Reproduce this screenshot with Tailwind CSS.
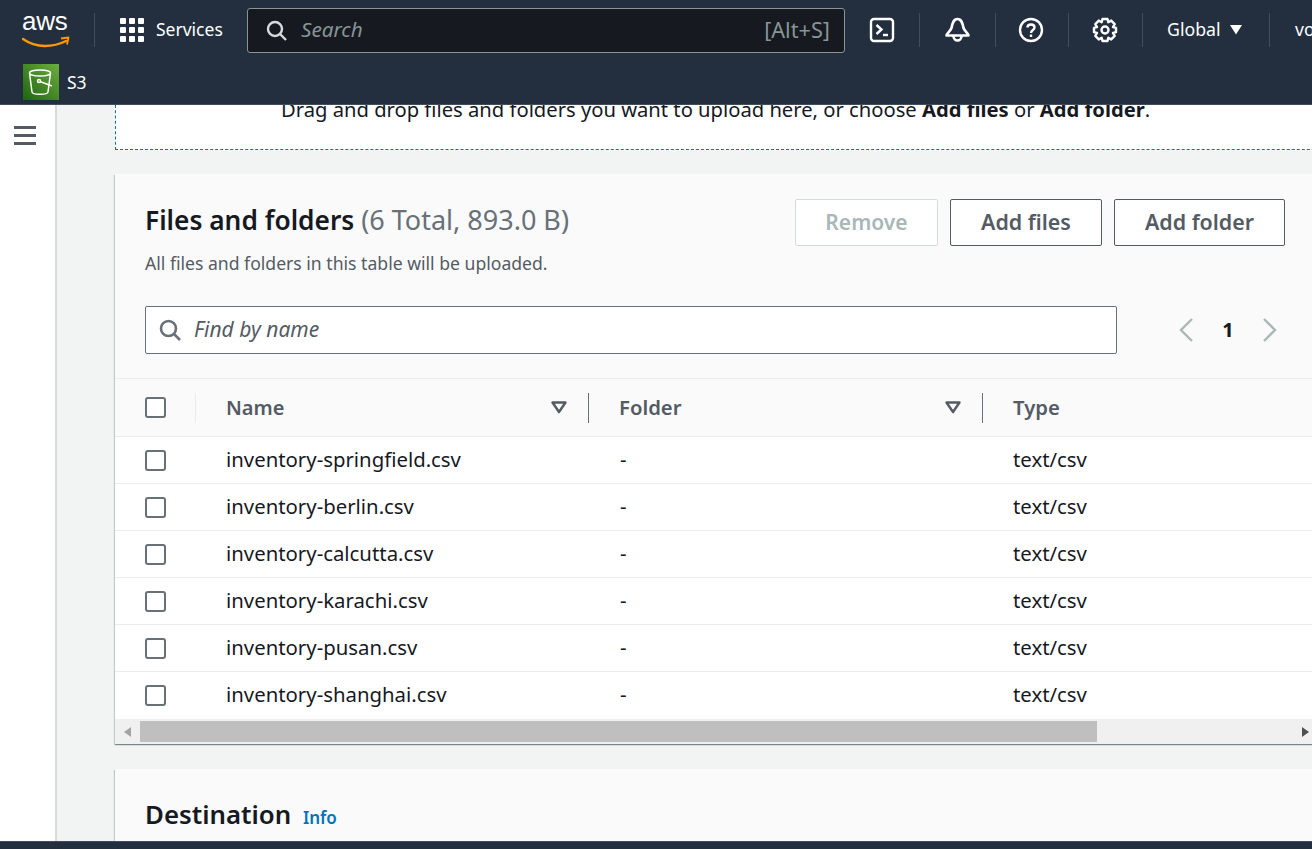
<!DOCTYPE html>
<html lang="en">
<head>
    <meta charset="UTF-8">
    <meta name="viewport" content="width=device-width, initial-scale=1.0">
    <script src="https://cdn.jsdelivr.net/npm/@tailwindcss/browser@4"></script>
    <title>Upload - S3</title>
</head>
<body class="bg-[#f2f3f3] font-['Noto_Sans',sans-serif] text-[#16191f] overflow-hidden">
<div class="flex flex-col h-[849px] w-[1312px] overflow-hidden">

    <!-- Top navigation -->
    <header class="h-[105px] shrink-0 bg-[#232f3e] border-b border-[#414d5c] text-white">
        <div class="h-[60px] flex items-center whitespace-nowrap overflow-hidden">
            <div class="w-[94px] shrink-0 flex justify-center pr-[2px]">
                <div class="relative w-[48px] h-[34px]">
                    <span class="absolute left-0 top-[-9px] text-[26px] leading-[34px] tracking-[-0.3px] font-['Liberation_Sans',sans-serif]">aws</span>
                    <svg class="absolute left-0 top-[22px]" width="48" height="14" viewBox="0 0 48 14" fill="none">
                        <path d="M1 4C8 9 15 11 23 11C31 11 38 9 44 6" stroke="#f90" stroke-width="2.4" stroke-linecap="round"/>
                        <path d="M39 3.5L46.5 2.5L45 9.5" stroke="#f90" stroke-width="1.8" fill="none" stroke-linejoin="round"/>
                    </svg>
                </div>
            </div>
            <div class="w-px h-[34px] bg-[#414d5c] shrink-0"></div>
            <div class="w-[152px] shrink-0 flex items-center pl-[25px]">
                <div class="grid grid-cols-3 gap-[3px]">
                    <i class="w-[6px] h-[6px] bg-white rounded-[1px]"></i><i class="w-[6px] h-[6px] bg-white rounded-[1px]"></i><i class="w-[6px] h-[6px] bg-white rounded-[1px]"></i>
                    <i class="w-[6px] h-[6px] bg-white rounded-[1px]"></i><i class="w-[6px] h-[6px] bg-white rounded-[1px]"></i><i class="w-[6px] h-[6px] bg-white rounded-[1px]"></i>
                    <i class="w-[6px] h-[6px] bg-white rounded-[1px]"></i><i class="w-[6px] h-[6px] bg-white rounded-[1px]"></i><i class="w-[6px] h-[6px] bg-white rounded-[1px]"></i>
                </div>
                <span class="ml-[12px] mb-[2px] text-[17.5px]">Services</span>
            </div>
            <div class="w-[598px] h-[45px] shrink-0 bg-[#16191f] border border-[#879596] rounded-[3px] flex items-center pl-[18px] pr-[14px]">
                <svg width="21" height="21" viewBox="0 0 21 21" fill="none" stroke="#d5dbdb" stroke-width="2.4">
                    <circle cx="9" cy="9" r="7"/><path d="M14 14L20 20"/>
                </svg>
                <span class="ml-[14px] italic text-[20.7px] text-[#879596]">Search</span>
                <span class="ml-auto text-[21.7px] text-[#879596]">[Alt+S]</span>
            </div>
            <div class="w-[74px] shrink-0 flex justify-center">
                <svg width="26" height="26" viewBox="0 0 26 26" fill="none" stroke="#fff" stroke-width="2.4">
                    <rect x="2" y="2" width="22" height="22" rx="3"/>
                    <path d="M7.5 8L12.5 12.5L7.5 17"/><path d="M14 18H19"/>
                </svg>
            </div>
            <div class="w-px h-[34px] bg-[#414d5c] shrink-0"></div>
            <div class="w-[75px] shrink-0 flex justify-center pr-[1px]">
                <svg width="25" height="26" viewBox="0 0 25 26" fill="none" stroke="#fff" stroke-width="2.6" stroke-linejoin="round">
                    <path d="M1.500 18.500H23.500C23.500 16.500 19.500 14 18.500 11C17.500 6 16.500 2 12.500 2C8.500 2 7.500 6 6.500 11C5.500 14 1.500 16.500 1.500 18.500Z"/>
                    <path d="M8.500 19C8.500 25 16.500 25 16.500 19"/>
                </svg>
            </div>
            <div class="w-px h-[34px] bg-[#414d5c] shrink-0"></div>
            <div class="w-[72px] shrink-0 flex justify-center pr-[2px]">
                <svg width="26" height="26" viewBox="0 0 26 26" fill="none" stroke="#fff" stroke-width="2.4">
                    <circle cx="13" cy="13" r="11"/>
                    <path d="M9.500 10.500C9.500 6.500 16.500 6.500 16.500 10.500C16.500 13 13 13 13 16"/>
                    <path d="M13 17.500V20"/>
                </svg>
            </div>
            <div class="w-px h-[34px] bg-[#414d5c] shrink-0"></div>
            <div class="w-[73px] shrink-0 flex justify-center pr-[1px]">
                <svg width="26" height="26" viewBox="0 0 26 26" fill="none" stroke="#fff" stroke-width="2.4" stroke-linejoin="round">
                    <circle cx="13" cy="13" r="3.500"/>
                    <path d="M10.500 2H15.500L16.300 5.200L19.200 3.600L22.700 7.100L21 10L24 10.800V15.200L21 16L22.700 18.900L19.200 22.400L16.300 20.800L15.500 24H10.500L9.700 20.800L6.800 22.400L3.300 18.900L5 16L2 15.200V10.800L5 10L3.300 7.100L6.800 3.600L9.700 5.200Z"/>
                </svg>
            </div>
            <div class="w-px h-[34px] bg-[#414d5c] shrink-0"></div>
            <div class="w-[126px] shrink-0 flex items-center pl-[24px]">
                <span class="text-[17.7px] mb-[2px]">Global</span>
                <svg class="ml-[9px]" width="12" height="10" viewBox="0 0 12 10" fill="#fff"><path d="M0 0H12L6 9.500Z"/></svg>
            </div>
            <div class="w-px h-[34px] bg-[#414d5c] shrink-0"></div>
            <span class="pl-[25px] mb-[2px] text-[17.5px]">voclabs</span>
        </div>
        <div class="h-[44px] pl-[23px] flex items-start">
            <div class="w-[36px] h-[36px] mt-[4px] bg-gradient-to-tr from-[#1b660f] to-[#6cae3e] flex items-center justify-center">
                <svg width="26" height="28" viewBox="0 0 26 28" fill="none" stroke="#fff" stroke-width="1.500">
                    <ellipse cx="12" cy="5" rx="10.500" ry="3"/>
                    <path d="M1.500 5L4 24C4.500 27 19.500 27 20 24L22.500 5"/>
                    <circle cx="11" cy="13" r="1.500"/>
                    <path d="M12 13.500L24 18"/>
                </svg>
            </div>
            <span class="ml-[8px] mt-[9px] text-[17.5px]">S3</span>
        </div>
    </header>

    <div class="flex flex-1 min-h-0">
        <!-- Collapsed side navigation -->
        <aside class="w-[57px] shrink-0 bg-white border-r-2 border-[#d5dbdb] pl-[14px] pt-[21px]">
            <div class="w-[22px] flex flex-col gap-[5px]">
                <div class="h-[3px] bg-[#545b64]"></div>
                <div class="h-[3px] bg-[#545b64]"></div>
                <div class="h-[3px] bg-[#545b64]"></div>
            </div>
        </aside>

        <main class="flex-1 min-w-0 overflow-hidden pl-[58px]">
            <!-- Drop zone, scrolled partly out of view -->
            <div class="h-[45px] w-[1300px] bg-white border-b border-l border-dashed border-[#0073bb] overflow-hidden">
                <p class="mt-[-8px] ml-[165px] text-[20.2px] leading-[24px] whitespace-nowrap">Drag and drop files and folders you want to upload here, or choose <b class="font-bold">Add files</b> or <b class="font-bold">Add folder</b>.</p>
            </div>

            <!-- Files and folders -->
            <section class="mt-[24px] w-[1300px] bg-white shadow-[0_1px_1px_0_rgba(0,28,36,0.3),1px_1px_1px_0_rgba(0,28,36,0.15),-1px_1px_1px_0_rgba(0,28,36,0.15)]">
                <div class="h-[205px] bg-[#fafafa] border-b border-[#eaeded] pl-[30px]">
                    <div class="flex w-[1140px]">
                        <div class="pt-[27px]">
                            <h2 class="text-[26.3px] leading-[38px] font-semibold whitespace-nowrap">Files and folders <span class="font-normal text-[27px] text-[#687078]">(6 Total, 893.0 B)</span></h2>
                            <p class="mt-[13px] text-[17.6px] leading-[22px] text-[#545b64]">All files and folders in this table will be uploaded.</p>
                        </div>
                        <div class="ml-auto flex gap-[12px] pt-[25px]">
                            <button class="w-[143px] h-[47px] bg-white border border-[#d5dbdb] rounded-[2px] text-[21px] font-semibold text-[#aab7b8]">Remove</button>
                            <button class="w-[152px] h-[47px] pb-[1px] bg-white border border-[#545b64] rounded-[2px] text-[21.4px] font-semibold text-[#545b64]">Add files</button>
                            <button class="w-[171px] h-[47px] pb-[1px] bg-white border border-[#545b64] rounded-[2px] text-[21.4px] font-semibold text-[#545b64]">Add folder</button>
                        </div>
                    </div>
                    <div class="flex items-center mt-[32px]">
                        <div class="w-[972px] h-[48px] bg-white border border-[#687078] rounded-[2px] flex items-center pl-[13px]">
                            <svg width="22" height="22" viewBox="0 0 22 22" fill="none" stroke="#687078" stroke-width="2.600">
                                <circle cx="9.500" cy="9.500" r="7.500"/><path d="M15 15L21 21"/>
                            </svg>
                            <span class="ml-[13px] italic text-[21px] text-[#545b64]">Find by name</span>
                        </div>
                        <svg class="ml-[62px]" width="14" height="24" viewBox="0 0 14 24" fill="none" stroke="#aab7b8" stroke-width="2.400"><path d="M13 1L2 12L13 23"/></svg>
                        <span class="w-[14px] ml-[28px] text-[20px] font-bold text-center">1</span>
                        <svg class="ml-[28px]" width="14" height="24" viewBox="0 0 14 24" fill="none" stroke="#aab7b8" stroke-width="2.400"><path d="M1 1L12 12L1 23"/></svg>
                    </div>
                </div>

                <!-- Table header -->
                <div class="h-[58px] bg-[#fafafa] border-b border-[#eaeded] flex items-center text-[#545b64]">
                    <div class="w-[80px] shrink-0 pl-[30px] flex"><span class="w-[21px] h-[21px] bg-white border-2 border-[#687078] rounded-[3px]"></span></div>
                    <div class="w-px h-[30px] bg-[#eaeded]"></div>
                    <div class="w-[392px] flex items-center pl-[30px] pr-[21px] text-[20px] font-semibold">
                        <span>Name</span>
                        <svg class="ml-auto" width="16" height="13" viewBox="0 0 16 13" fill="none" stroke="#545b64" stroke-width="2.400" stroke-linejoin="round"><path d="M1.500 1.500H14.500L8 11Z"/></svg>
                    </div>
                    <div class="w-px h-[30px] bg-[#687078]"></div>
                    <div class="w-[393px] flex items-center pl-[30px] pr-[21px] text-[20.3px] font-semibold">
                        <span>Folder</span>
                        <svg class="ml-auto" width="16" height="13" viewBox="0 0 16 13" fill="none" stroke="#545b64" stroke-width="2.400" stroke-linejoin="round"><path d="M1.500 1.500H14.500L8 11Z"/></svg>
                    </div>
                    <div class="w-px h-[30px] bg-[#687078]"></div>
                    <div class="pl-[30px] text-[20.3px] font-semibold">Type</div>
                </div>

                <!-- Table rows -->
                <div class="text-[20.35px] text-[#16191f]">
                    <div class="h-[47px] border-b border-[#eaeded] flex items-center">
                        <div class="w-[111px] shrink-0 pl-[30px] flex"><span class="w-[21px] h-[21px] border-2 border-[#687078] rounded-[3px]"></span></div>
                        <div class="w-[394px] shrink-0 mb-[2px]">inventory-springfield.csv</div><div class="w-[393px] shrink-0 mb-[2px]">-</div><div class="mb-[2px]">text/csv</div>
                    </div>
                    <div class="h-[47px] border-b border-[#eaeded] flex items-center">
                        <div class="w-[111px] shrink-0 pl-[30px] flex"><span class="w-[21px] h-[21px] border-2 border-[#687078] rounded-[3px]"></span></div>
                        <div class="w-[394px] shrink-0 mb-[2px]">inventory-berlin.csv</div><div class="w-[393px] shrink-0 mb-[2px]">-</div><div class="mb-[2px]">text/csv</div>
                    </div>
                    <div class="h-[47px] border-b border-[#eaeded] flex items-center">
                        <div class="w-[111px] shrink-0 pl-[30px] flex"><span class="w-[21px] h-[21px] border-2 border-[#687078] rounded-[3px]"></span></div>
                        <div class="w-[394px] shrink-0 mb-[2px]">inventory-calcutta.csv</div><div class="w-[393px] shrink-0 mb-[2px]">-</div><div class="mb-[2px]">text/csv</div>
                    </div>
                    <div class="h-[47px] border-b border-[#eaeded] flex items-center">
                        <div class="w-[111px] shrink-0 pl-[30px] flex"><span class="w-[21px] h-[21px] border-2 border-[#687078] rounded-[3px]"></span></div>
                        <div class="w-[394px] shrink-0 mb-[2px]">inventory-karachi.csv</div><div class="w-[393px] shrink-0 mb-[2px]">-</div><div class="mb-[2px]">text/csv</div>
                    </div>
                    <div class="h-[47px] border-b border-[#eaeded] flex items-center">
                        <div class="w-[111px] shrink-0 pl-[30px] flex"><span class="w-[21px] h-[21px] border-2 border-[#687078] rounded-[3px]"></span></div>
                        <div class="w-[394px] shrink-0 mb-[2px]">inventory-pusan.csv</div><div class="w-[393px] shrink-0 mb-[2px]">-</div><div class="mb-[2px]">text/csv</div>
                    </div>
                    <div class="h-[47px] flex items-center">
                        <div class="w-[111px] shrink-0 pl-[30px] flex"><span class="w-[21px] h-[21px] border-2 border-[#687078] rounded-[3px]"></span></div>
                        <div class="w-[394px] shrink-0 mb-[2px]">inventory-shanghai.csv</div><div class="w-[393px] shrink-0 mb-[2px]">-</div><div class="mb-[2px]">text/csv</div>
                    </div>
                </div>

                <!-- Horizontal scrollbar -->
                <div class="h-[25px] w-[1197px] bg-[#f0f0f0] flex items-center">
                    <svg class="ml-[9px] mr-[9px] shrink-0" width="7" height="10" viewBox="0 0 7 10" fill="#a3a3a3"><path d="M7 0V10L0 5Z"/></svg>
                    <div class="w-[957px] h-[21px] bg-[#bfbfbf]"></div>
                    <svg class="ml-auto mr-[3px]" width="7" height="10" viewBox="0 0 7 10" fill="#505050"><path d="M0 0V10L7 5Z"/></svg>
                </div>
            </section>

            <!-- Destination -->
            <section class="mt-[25px] w-[1300px] h-[100px] bg-[#fafafa] shadow-[0_1px_1px_0_rgba(0,28,36,0.3),1px_1px_1px_0_rgba(0,28,36,0.15),-1px_1px_1px_0_rgba(0,28,36,0.15)] pl-[30px] pt-[27px]">
                <h2 class="text-[25.8px] leading-[36px] font-semibold">Destination <span class="ml-[5px] text-[17px] text-[#0073bb] font-semibold">Info</span></h2>
            </section>
        </main>
    </div>

    <footer class="h-[8px] shrink-0 bg-[#232f3e] border-t border-[#414d5c]"></footer>
</div>
</body>
</html>
